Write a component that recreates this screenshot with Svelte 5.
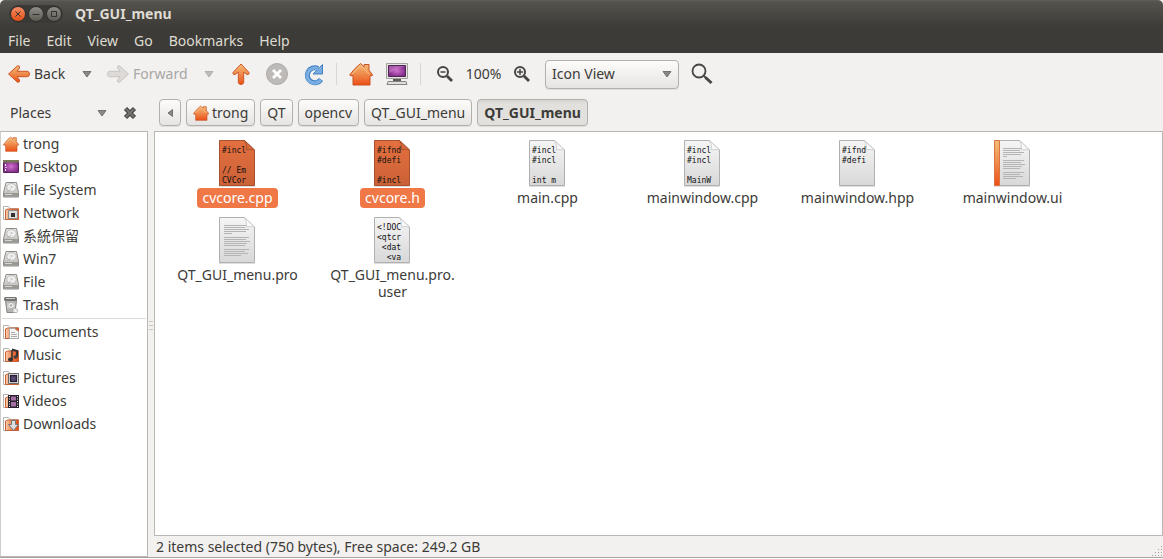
<script lang="ts">
    type Place = {
        label: string;
        icon: string;
    };

    type FileItem = {
        name: string;
        kind: "code" | "text" | "ui";
        lines?: string[];
    };

    const menus = ["File", "Edit", "View", "Go", "Bookmarks", "Help"];

    const places: Place[] = [
        { label: "trong", icon: "home" },
        { label: "Desktop", icon: "desktop" },
        { label: "File System", icon: "drive" },
        { label: "Network", icon: "network" },
        { label: "系統保留", icon: "drive" },
        { label: "Win7", icon: "drive" },
        { label: "File", icon: "drive" },
        { label: "Trash", icon: "trash" },
    ];

    const bookmarks: Place[] = [
        { label: "Documents", icon: "documents" },
        { label: "Music", icon: "music" },
        { label: "Pictures", icon: "pictures" },
        { label: "Videos", icon: "videos" },
        { label: "Downloads", icon: "downloads" },
    ];

    const path = ["trong", "QT", "opencv", "QT_GUI_menu", "QT_GUI_menu"];

    const files: FileItem[] = [
        { name: "cvcore.cpp", kind: "code", lines: ["#incl", "", "// Em", "CVCor"] },
        { name: "cvcore.h", kind: "code", lines: ["#ifnd", "#defi", "", "#incl"] },
        { name: "main.cpp", kind: "code", lines: ["#incl", "#incl", "", "int m"] },
        { name: "mainwindow.cpp", kind: "code", lines: ["#incl", "#incl", "", "MainW"] },
        { name: "mainwindow.hpp", kind: "code", lines: ["#ifnd", "#defi"] },
        { name: "mainwindow.ui", kind: "ui" },
        { name: "QT_GUI_menu.pro", kind: "text" },
        { name: "QT_GUI_menu.pro.user", kind: "code", lines: ["<!DOC", "<qtcr", " <dat", "  <va"] },
    ];

    // y and width of the grey lines on a plain text page
    const text_rows = [
        [10, 25], [12, 21], [14, 25], [16, 22], [18, 8],
        [22, 25], [24, 22], [26, 26], [28, 23], [30, 21],
        [34, 25], [36, 21], [38, 24], [40, 17],
    ];

    let selected = $state(["cvcore.cpp", "cvcore.h"]);
    let current = $state(path.length - 1);

    function toggle(name: string) {
        if (selected.includes(name)) {
            selected = selected.filter((n) => n != name);
        } else {
            selected = [...selected, name];
        }
    }
</script>

{#snippet caret()}
    <svg width="10" height="8" viewBox="0 0 10 8">
        <path d="M1 1.5h8L5 7z" fill="#8b8986" stroke="#62605c" stroke-width=".8" />
    </svg>
{/snippet}

{#snippet arrow()}
    <path d="M1.5 11 10.5 2.8q2.4-.6 2 2.2L10 8.3h10.5q2 .4 2 2.7t-2 2.7H10l2.500 3.300q.4 2.800-2 2.200z" />
{/snippet}

{#snippet house(size: number)}
    <svg width={size} height={size} viewBox="0 0 24 24">
        <path
            d="M11.500 1.500 6 6.500 .800 12.800l.5.900H4V23h17v-9.300h2.200l.3-.9-3.500-4.600V2.500h-4.800v2.300z"
            fill="url(#orange)"
            stroke="#c9501f"
        />
        <path d="M3 12.200 11.500 3.400l9 8.800" fill="none" stroke="#f9c58a" />
    </svg>
{/snippet}

{#snippet folder()}
    <path d="M.5 14.500v-13h5l1.500 2h8.500v11z" fill="#fff" stroke="#b5b3ae" />
    <path d="M2.500 14.500v-9.500l2-1h11v10.500z" fill="url(#folder)" stroke="#c96036" />
{/snippet}

{#snippet place_icon(name: string)}
    {#if name == "home"}
        {@render house(16)}
    {:else}
        <svg width="16" height="16" viewBox="0 0 16 16">
            {#if name == "desktop"}
                <path d="M.5 1.500h15v12H.500z" fill="url(#screen)" stroke="#5b2460" />
                <path d="M0 1h16v2.500H0z" fill="#777a55" />
                <path d="M2 5h1v2H2zM2 10h1v2H2z" fill="#fff" />
                <path d="M2 8h2v1H2z" fill="#e8a8e8" />
            {:else if name == "drive"}
                <path d="M3 .5h10.500l2 10v4.500H.500v-4.500z" fill="url(#metal)" stroke="#8f8d89" />
                <ellipse cx="8.500" cy="5.500" rx="4.800" ry="4" fill="#eee" stroke="#bdbbb8" />
                <circle cx="8.500" cy="5" r="1" fill="#c5c5c5" />
                <path d="m4 10 4-2.500" stroke="#b5b5b5" />
                <path d="M1 11h14v3.500H1z" fill="#9a9895" />
                <path d="M2 12.500h7" stroke="#d5d5d5" />
            {:else if name == "trash"}
                <path d="M2.500 3.500h11l-1.500 12H4z" fill="#b5b5b3" stroke="#858785" />
                <path d="M5 6v6M11 6v6" stroke="#dededc" />
                <rect x="1" y="0" width="13" height="4" rx="1.500" fill="#747674" />
                <path d="M3 1.500h9" stroke="#ccc" />
                <circle cx="8" cy="8.500" r="2" fill="none" stroke="#fff" />
                <path d="m10 12.500 2-1.500 3 2-1 2.500h-4z" fill="#eee" stroke="#999" stroke-width=".6" />
            {:else}
                {@render folder()}
                {#if name == "network"}
                    <path d="M5.500 5.500h9v8h-9z" fill="#ddd" stroke="#8f8d89" />
                    <path d="M8 8h4v4H8z" fill="#333" />
                {:else if name == "documents"}
                    <path d="M6.500 4.500h5l4 3v7h-9z" fill="#f5f5f4" stroke="#aaa" />
                    <path d="M8 8.500h4M8 10.500h6M8 12.500h6" stroke="#aaa" />
                {:else if name == "music"}
                    <path d="M9 2.500 14 4v6" fill="none" stroke="#333" stroke-width="2" />
                    <path d="M9 3v9" stroke="#333" stroke-width="1.500" />
                    <ellipse cx="7.500" cy="12.500" rx="2.500" ry="1.900" fill="#333" />
                    <ellipse cx="12.500" cy="10" rx="2" ry="1.700" fill="#444" />
                {:else if name == "pictures"}
                    <path d="M5.500 3.500h10v10h-10z" fill="#fff" stroke="#6b6966" />
                    <path d="M7.500 5.500h6v6h-6z" fill="#584a70" stroke="#282038" stroke-width="1.500" />
                {:else if name == "videos"}
                    <path d="M5 2h11v13H5z" fill="#28222c" />
                    <path d="M8 3.500h5v4H8zM8 9h5v4.500H8z" fill="#a36fa5" />
                    <path d="M6.500 3v11M14.500 3v11" stroke="#eee" stroke-dasharray="1 1.500" />
                {:else}
                    <path d="M8.500 4.500h4v4h3l-5 6-5-6h3z" fill="#ddd" stroke="#777" />
                {/if}
            {/if}
        </svg>
    {/if}
{/snippet}

{#snippet place_list(items: Place[])}
    <ul>
        {#each items as place}
            <li>
                <button class="place">
                    {@render place_icon(place.icon)}
                    {place.label}
                </button>
            </li>
        {/each}
    </ul>
{/snippet}

<svg class="defs" width="0" height="0" aria-hidden="true">
    <defs>
        <linearGradient id="orange" x2="0" y2="1">
            <stop stop-color="#f3bd78" />
            <stop offset=".5" stop-color="#ef8a4b" />
            <stop offset="1" stop-color="#ed4f16" />
        </linearGradient>
        <linearGradient id="folder" x2="1" y2="0">
            <stop stop-color="#fbd3b0" />
            <stop offset=".5" stop-color="#ec7a48" />
            <stop offset="1" stop-color="#dc4815" />
        </linearGradient>
        <linearGradient id="metal" x2="0" y2="1">
            <stop stop-color="#e8e8e7" />
            <stop offset="1" stop-color="#bbb9b5" />
        </linearGradient>
        <linearGradient id="paper" x2="0" y2="1">
            <stop stop-color="#f5f5f5" />
            <stop offset="1" stop-color="#d8d8d8" />
        </linearGradient>
        <linearGradient id="paper-on" x2="0" y2="1">
            <stop stop-color="#e4703f" />
            <stop offset="1" stop-color="#cb6137" />
        </linearGradient>
        <radialGradient id="screen">
            <stop stop-color="#d36fd0" />
            <stop offset="1" stop-color="#84308b" />
        </radialGradient>
    </defs>
</svg>

<div class="window">
    <header class="titlebar">
        <div class="controls">
            <button class="close" aria-label="Close">
                <svg viewBox="0 0 14 14"><path d="m4.500 4.500 5 5m0-5-5 5" /></svg>
            </button>
            <button aria-label="Minimize">
                <svg viewBox="0 0 14 14"><path d="M3.500 7.500h7" /></svg>
            </button>
            <button aria-label="Maximize">
                <svg viewBox="0 0 14 14"><path d="M4.500 4.500h5v5h-5z" /></svg>
            </button>
        </div>
        <h1>QT_GUI_menu</h1>
    </header>

    <nav class="menubar">
        {#each menus as menu}
            <button>{menu}</button>
        {/each}
    </nav>

    <div class="toolbar">
        <button class="labelled back">
            <svg width="24" height="22" viewBox="0 0 24 22" fill="url(#orange)" stroke="#cf5524">
                {@render arrow()}
            </svg>
            Back
        </button>
        <button class="drop" aria-label="Back history">{@render caret()}</button>
        <button class="labelled forward" disabled>
            <svg width="24" height="22" viewBox="0 0 24 22" fill="#dddad8" stroke="#c8c4c1">
                <g transform="matrix(-1 0 0 1 24 0)">{@render arrow()}</g>
            </svg>
            Forward
        </button>
        <button class="drop" aria-label="Forward history" disabled>{@render caret()}</button>
        <button class="tool" aria-label="Up">
            <svg width="22" height="24" viewBox="0 0 22 24" fill="url(#orange)" stroke="#cf5524">
                <path d="m11 2 8 8.500q.6 2.400-2.200 2l-3.100-2.500v10.500q-.4 2-2.700 2t-2.700-2V10l-3.100 2.500q-2.800.4-2.200-2z" />
            </svg>
        </button>
        <button class="tool" aria-label="Stop" disabled>
            <svg width="24" height="24" viewBox="0 0 24 24">
                <circle cx="12" cy="12" r="10.500" fill="#bebab8" stroke="#aeaaa8" />
                <path d="m8 8 8 8m0-8-8 8" stroke="#fff" stroke-width="2.800" />
            </svg>
        </button>
        <button class="tool" aria-label="Reload">
            <svg width="24" height="24" viewBox="0 0 24 24" fill="none">
                <path d="M20 17.500A7.500 7.500 0 1 1 17 6.500" stroke="#4382c3" stroke-width="5" />
                <path d="M21.500 2.500v9.500H12l3.500-3.500 3-3z" fill="#79abe0" stroke="#4382c3" />
                <path d="M19.500 18A7.500 7.500 0 1 1 17 7" stroke="#8ab8e8" stroke-width="3" />
                <path d="M19 18A7.500 7.500 0 1 1 16.500 7" stroke="#5d99d6" stroke-width=".8" />
            </svg>
        </button>
        <span class="sep"></span>
        <button class="tool" aria-label="Home">{@render house(24)}</button>
        <button class="tool" aria-label="Computer">
            <svg width="24" height="24" viewBox="0 0 24 24">
                <path d="M1.500 1.500h21v15h-21z" fill="#e6e5e2" stroke="#a3a19e" />
                <path d="M3.500 3.500h17v11h-17z" fill="url(#screen)" stroke="#4c2551" />
                <path d="M4 4h16L4 11z" fill="#e4a0df" opacity=".35" />
                <path d="M8 17h8v3H8z" fill="#5f5d59" />
                <path d="M3 19.500h18l1 3H2z" fill="#dededc" stroke="#85837f" />
            </svg>
        </button>
        <span class="sep"></span>
        <button class="tool" aria-label="Zoom out">
            <svg width="18" height="18" viewBox="0 0 18 18" fill="none" stroke="#474541" stroke-width="2">
                <circle cx="7" cy="7" r="5" />
                <path d="M4.500 7h5" stroke-width="1.500" />
                <path d="m11 11 5 5" stroke-width="2.800" />
            </svg>
        </button>
        <span class="zoom">100%</span>
        <button class="tool" aria-label="Zoom in">
            <svg width="18" height="18" viewBox="0 0 18 18" fill="none" stroke="#474541" stroke-width="2">
                <circle cx="7" cy="7" r="5" />
                <path d="M4 7h6M7 4v6" stroke-width="1.500" />
                <path d="m11 11 5 5" stroke-width="2.800" />
            </svg>
        </button>
        <label class="view">
            <select aria-label="View">
                <option>Icon View</option>
                <option>List View</option>
                <option>Compact View</option>
            </select>
            {@render caret()}
        </label>
        <button class="tool" aria-label="Search">
            <svg width="24" height="24" viewBox="0 0 24 24" fill="none" stroke="#474541">
                <circle cx="9" cy="9" r="6.500" stroke-width="1.800" />
                <path d="m13.500 13.500 3 3" stroke-width="1.800" />
                <path d="m15.500 15.500 6 5.500" stroke-width="3" />
            </svg>
        </button>
    </div>

    <div class="body">
        <aside>
            <div class="side-header">
                <button class="side-title">Places {@render caret()}</button>
                <button aria-label="Close sidebar">
                    <svg width="14" height="14" viewBox="0 0 14 14">
                        <path d="m2.500 2.500 9 9m0-9-9 9" stroke="#474541" stroke-width="4.500" />
                        <path d="m3 3 8 8m0-8-8 8" stroke="#777571" stroke-width="2" />
                    </svg>
                </button>
            </div>
            <div class="places">
                {@render place_list(places)}
                <hr />
                {@render place_list(bookmarks)}
            </div>
        </aside>
        <div class="grip"><i></i><i></i><i></i></div>

        <main>
            <nav class="pathbar">
                <button class="prev" aria-label="Scroll path left">
                    <svg width="6" height="8"><path d="M5.500.500v7L1 4z" fill="#8b8986" stroke="#62605c" stroke-width=".8" /></svg>
                </button>
                {#each path as part, i}
                    <button class:current={i == current} onclick={() => (current = i)}>
                        {#if i == 0}{@render house(16)}{/if}
                        {part}
                    </button>
                {/each}
            </nav>

            <div class="files">
                {#each files as file}
                    {@const on = selected.includes(file.name)}
                    <button class="file" class:on aria-pressed={on} onclick={() => toggle(file.name)}>
                        <svg width="37" height="46" viewBox="1 0 37 46">
                            <path d="M1 46.500h36" stroke="#000" opacity=".12" />
                            <path
                                d="M1.500.500h25l10 9.500v35.500h-35z"
                                fill={on ? "url(#paper-on)" : "url(#paper)"}
                                stroke={on ? "#a9502c" : "#b0b0b0"}
                            />
                            {#if file.kind == "ui"}
                                <path d="M1.500.500h5v45h-5z" fill="url(#orange)" stroke="#dc7442" />
                            {/if}
                            {#if file.kind != "code"}
                                {#each text_rows as [y, w]}
                                    <path
                                        d="M{file.kind == 'ui' ? 10 : 6} {y - 1.5}h{file.kind == 'ui' ? w - 4 : w}"
                                        stroke="#b4b4b4"
                                    />
                                {/each}
                            {/if}
                            <path
                                d="M26.500.500 36.500 10q-5-1-8 0 .500-6-2-9.500z"
                                fill={on ? "#d5683b" : "#fafafa"}
                                stroke={on ? "#9c4826" : "#c2c2c2"}
                                stroke-width=".7"
                            />
                            {#each file.lines ?? [] as line, i}
                                <text x="4" y={13 + i * 10}>{line}</text>
                            {/each}
                        </svg>
                        <span>
                            {#if file.name.endsWith(".user")}
                                QT_GUI_menu.pro.<wbr />user
                            {:else}
                                {file.name}
                            {/if}
                        </span>
                    </button>
                {/each}
            </div>

            <footer>
                2 items selected (750 bytes), Free space: 249.2 GB
                <svg width="12" height="12" viewBox="0 0 12 12" fill="#a5a39f">
                    <path d="M10 1h1v1h-1zM7 4h1v1H7zM10 4h1v1h-1zM4 7h1v1H4zM7 7h1v1H7zM10 7h1v1h-1zM1 10h1v1H1zM4 10h1v1H4zM7 10h1v1H7zM10 10h1v1h-1z" />
                </svg>
            </footer>
        </main>
    </div>
</div>

<style>
    :global(body) {
        margin: 0;
        background: #fff;
    }

    .defs {
        position: absolute;
    }

    .window {
        box-sizing: border-box;
        min-height: calc(100vh - 1px);
        margin-bottom: 1px;
        display: flex;
        flex-direction: column;
        border-bottom: 1px solid #a6a4a0;
        background: #f2f1f0;
        color: #3c3b37;
        font: 14px/20px "Noto Sans", "Noto Sans CJK TC", sans-serif;
    }

    button,
    select {
        margin: 0;
        padding: 0;
        border: none;
        background: none;
        color: inherit;
        font: inherit;
    }

    svg {
        display: block;
        flex: none;
    }

    .titlebar {
        display: flex;
        align-items: center;
        height: 28px;
        gap: 12px;
        padding-left: 9px;
        border-radius: 5px 5px 0 0;
        background: linear-gradient(#62605a, #54534d 2px, #3d3c38 26px);
        color: #dfdbd2;
    }

    .controls {
        display: flex;
        gap: 2px;
        padding: 1px;
        border-radius: 10px;
        background: #3a3935;
    }

    .controls button {
        border: 1px solid #32312d;
        border-radius: 50%;
        background: linear-gradient(#8f8d85, #5c5b55);
    }

    .controls .close {
        background: linear-gradient(#f78d66, #e24e17);
    }

    .controls svg {
        width: 14px;
        height: 14px;
        fill: none;
        stroke: #33322e;
    }

    h1 {
        margin: 0;
        font-size: 14px;
        line-height: 20px;
    }

    .menubar {
        display: flex;
        gap: 16px;
        height: 25px;
        padding-left: 8px;
        background: #3c3b37;
        color: #dfdbd2;
    }

    .toolbar {
        box-sizing: border-box;
        display: flex;
        align-items: center;
        height: 41px;
        padding: 1px 0 0 7px;
    }

    .labelled {
        display: flex;
        align-items: center;
        gap: 3px;
    }

    .back {
        width: 69px;
    }

    .forward {
        width: 92px;
    }

    .forward:disabled {
        color: #a9a6a3;
    }

    .drop {
        display: grid;
        place-content: center;
        width: 21px;
        height: 28px;
        margin-right: 9px;
    }

    .drop:disabled {
        margin-right: 4px;
        opacity: 0.5;
    }

    .tool {
        display: grid;
        place-content: center;
        width: 36px;
        height: 28px;
    }

    .sep {
        width: 1px;
        height: 22px;
        margin: 0 6px 0 5px;
        background: #d8d5d2;
    }

    .zoom {
        width: 41px;
        text-align: center;
    }

    .view {
        display: grid;
        align-items: center;
        width: 134px;
        margin: 0 5px;
    }

    .view select,
    .view svg {
        grid-area: 1 / 1;
    }

    .view svg {
        justify-self: end;
        margin-right: 7px;
        pointer-events: none;
    }

    select {
        appearance: none;
        height: 29px;
        padding-left: 6px;
    }

    select,
    .pathbar button {
        border: 1px solid #b3b0ac;
        border-radius: 4px;
        background: linear-gradient(#fcfcfb, #e6e4e2);
        box-shadow: 0 1px #e0dedb;
    }

    .body {
        flex: 1;
        display: flex;
    }

    aside {
        display: flex;
        flex-direction: column;
        width: 148px;
    }

    .side-header {
        display: flex;
        align-items: center;
        height: 37px;
    }

    .side-title {
        display: flex;
        justify-content: space-between;
        align-items: center;
        width: 97px;
        margin: 0 16px 0 10px;
    }

    .places {
        flex: 1;
        border: 1px solid #bab7b2;
        border-left-color: #d0cdc9;
        background: #fff;
    }

    ul {
        margin: 0;
        padding: 0;
        list-style: none;
    }

    .place {
        display: flex;
        align-items: center;
        gap: 4px;
        width: 100%;
        height: 23px;
        padding-left: 2px;
    }

    .place:lang(zh) {
        font-size: 15px;
    }

    hr {
        margin: 2px 1px 1px;
        border: none;
        border-top: 1px solid #dcdad7;
    }

    .grip {
        display: flex;
        flex-direction: column;
        justify-content: center;
        align-items: center;
        gap: 3px;
        width: 6px;
    }

    .grip i {
        width: 4px;
        height: 1px;
        background: #c9c6c2;
    }

    main {
        flex: 1;
        display: flex;
        flex-direction: column;
        min-width: 0;
    }

    .pathbar {
        display: flex;
        align-items: center;
        gap: 5px;
        height: 37px;
        padding-left: 5px;
    }

    .pathbar button {
        display: flex;
        justify-content: center;
        align-items: center;
        gap: 3px;
        height: 27px;
        padding: 0 6px;
    }

    .pathbar .prev {
        width: 22px;
    }

    .pathbar .current {
        background: linear-gradient(#d6d4d1, #e2e0dd 4px);
        font-weight: bold;
    }

    .files {
        flex: 1;
        display: grid;
        grid-template-columns: repeat(auto-fill, 155px);
        align-content: start;
        padding: 8px 5px;
        border: 1px solid #bab7b2;
        background: #fff;
    }

    .file {
        display: flex;
        flex-direction: column;
        align-items: center;
        min-height: 77px;
    }

    .file svg {
        overflow: visible;
    }

    .file span {
        max-width: 130px;
        margin-top: 2px;
        padding: 1px 5px 2px;
        border-radius: 4px;
        line-height: 17px;
    }

    .file.on span {
        background: #f07746;
        color: #fff;
    }

    .file text {
        font: 8px "DejaVu Sans Mono", monospace;
        fill: #111;
        white-space: pre;
    }

    footer {
        display: flex;
        justify-content: space-between;
        align-items: end;
        height: 21px;
        padding-left: 2px;
    }
</style>
